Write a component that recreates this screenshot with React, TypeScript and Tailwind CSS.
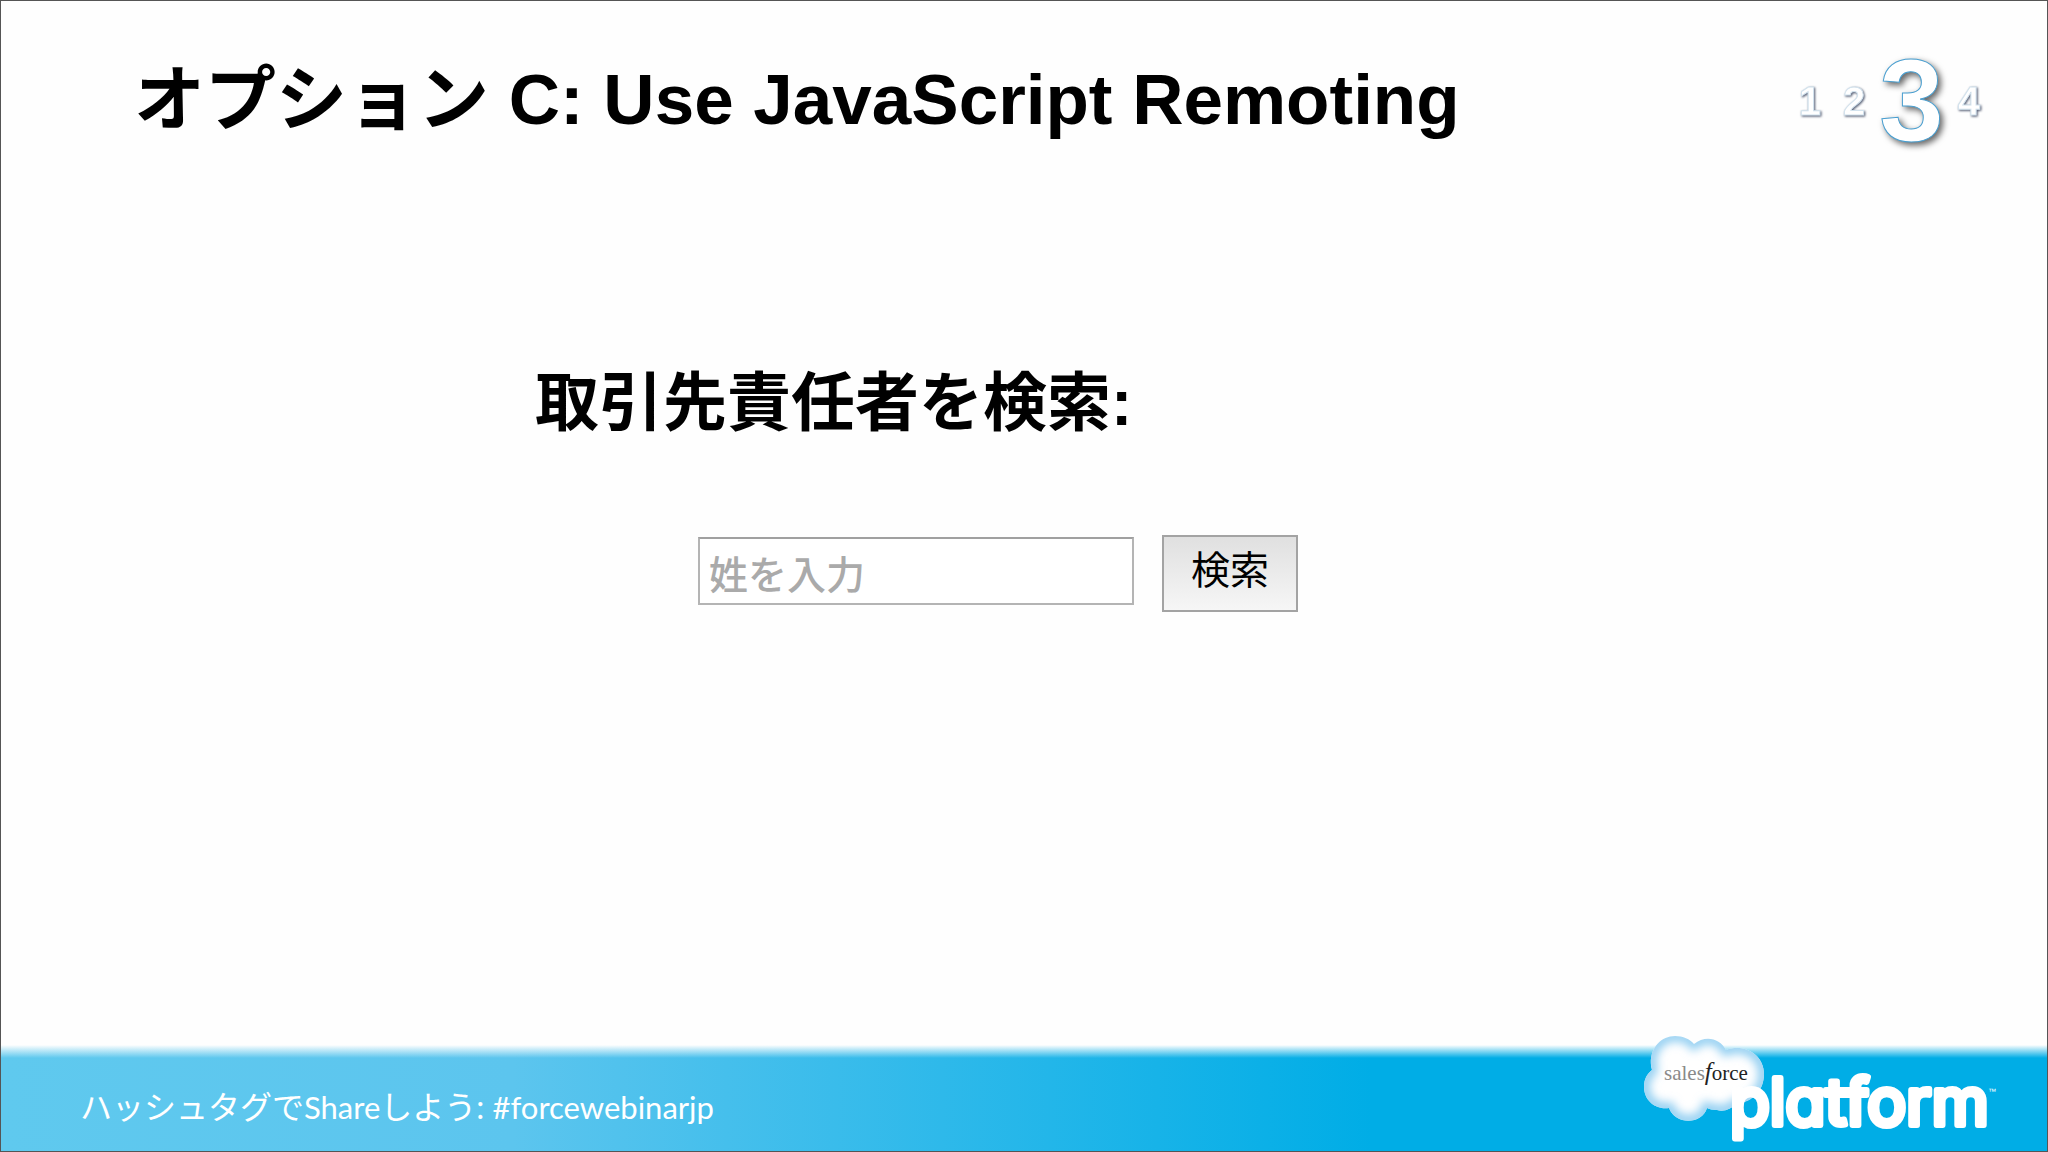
import React from 'react';

interface StepMarkerProps {
  label: string;
  active?: boolean;
}

const steps = ['1', '2', '3', '4'];
const currentStep = '3';

const cloudPath =
  'M33 40C28 22 40 6 56 6C64 6 71 9 75 14C86 5 101 8 107 20C126 13 145 25 145 44C145 60 134 72 117 74C112 79 105 82 98 80C94 80 90 79 88 78C83 95 56 95 50 78C36 80 25 70 25 57C25 49 28 44 33 40Z';

const StepMarker: React.FC<StepMarkerProps> = ({ label, active }) => (
  <li
    aria-current={active ? 'step' : undefined}
    className={
      active
        ? '-mx-2 text-[116px] leading-none text-white [-webkit-text-stroke:1px_#4a9fd0] [filter:drop-shadow(3px_3px_3px_rgba(0,0,0,0.6))]'
        : 'text-[40px] leading-none text-white [-webkit-text-stroke:1px_#d3e3ee] [filter:drop-shadow(1px_1px_1px_rgba(60,70,95,0.9))]'
    }
  >
    {label}
  </li>
);

const PlatformLogo: React.FC = () => (
  <svg
    viewBox="0 0 400 121"
    role="img"
    aria-label="salesforce platform"
    className="h-[121px] w-[400px] shrink-0"
  >
    <defs>
      <clipPath id="cloud-clip">
        <path d={cloudPath} />
      </clipPath>
      <filter id="cloud-glow" x="-20%" y="-20%" width="140%" height="140%">
        <feGaussianBlur stdDeviation="5" />
      </filter>
    </defs>
    <path d={cloudPath} fill="#ffffff" />
    <g clipPath="url(#cloud-clip)">
      <path d={cloudPath} fill="none" stroke="#8fcdf1" strokeWidth="11" filter="url(#cloud-glow)" />
    </g>
    <text x="45" y="50" fill="#222222" fontFamily='"Liberation Serif", serif' fontSize="21">
      <tspan fill="#8a8a8a">sales</tspan>
      <tspan fontStyle="italic" fontSize="25">f</tspan>
      <tspan>orce</tspan>
    </text>
    <text
      x="111"
      y="95"
      fill="#ffffff"
      stroke="#ffffff"
      strokeWidth="6"
      strokeLinejoin="round"
      fontFamily='Inter, "Liberation Sans", sans-serif'
      fontSize="65"
      style={{ fontFeatureSettings: '"cv11"' }}
    >
      platform
    </text>
    <text x="369" y="64" fill="#ffffff" fontFamily='"Liberation Sans", sans-serif' fontSize="8">
      ™
    </text>
  </svg>
);

export default function App() {
  return (
    <div className="flex min-h-screen flex-col border border-[#555555] bg-[#fefefe] font-['Liberation_Sans','Noto_Sans_CJK_JP',sans-serif] text-black">
      <header className="flex h-[196px] items-center justify-between pl-[133px] pr-[67px]">
        <h1 className="text-[71px] font-bold leading-none">オプション C: Use JavaScript Remoting</h1>
        <ol className="flex items-center gap-[22px] pt-[3px] font-bold">
          {steps.map((step) => (
            <StepMarker key={step} label={step} active={step === currentStep} />
          ))}
        </ol>
      </header>

      <main className="flex-1 pl-[534px] pt-[162px]">
        <label htmlFor="last-name" className="block text-[64px] font-bold leading-[88px]">
          取引先責任者を検索:
        </label>
        <form className="ml-[163px] mt-[88px] flex items-start gap-[28px]" onSubmit={(e) => e.preventDefault()}>
          <input
            id="last-name"
            type="text"
            placeholder="姓を入力"
            className="mt-[2px] h-[68px] w-[436px] border-2 border-[#b4b4b4] border-t-[#a0a0a0] bg-white px-[9px] pt-[10px] text-[39px] font-medium leading-none outline-none placeholder:text-[#aaaaaa]"
          />
          <button
            type="submit"
            className="h-[77px] w-[136px] border-2 border-[#a3a3a3] bg-linear-to-b from-[#e0e0e0] to-[#f6f6f6] pb-[6px] text-[39px] leading-none"
          >
            検索
          </button>
        </form>
      </main>

      <footer className="flex h-[121px] items-start justify-between bg-[linear-gradient(to_bottom,#fefefe_15px,transparent_28px),linear-gradient(to_right,#5fc9ee_0%,#5cc5ee_25%,#00ade6_67%)] pl-[79px] pr-[28px]">
        <p className="pt-[55px] font-['Lato','Noto_Sans_CJK_JP',sans-serif] text-[31px] leading-[44px] text-white">
          <span className="text-[32px]">ハッシュタグで</span>Share
          <span className="text-[32px]">しよう: </span>#forcewebinarjp
        </p>
        <PlatformLogo />
      </footer>
    </div>
  );
}
